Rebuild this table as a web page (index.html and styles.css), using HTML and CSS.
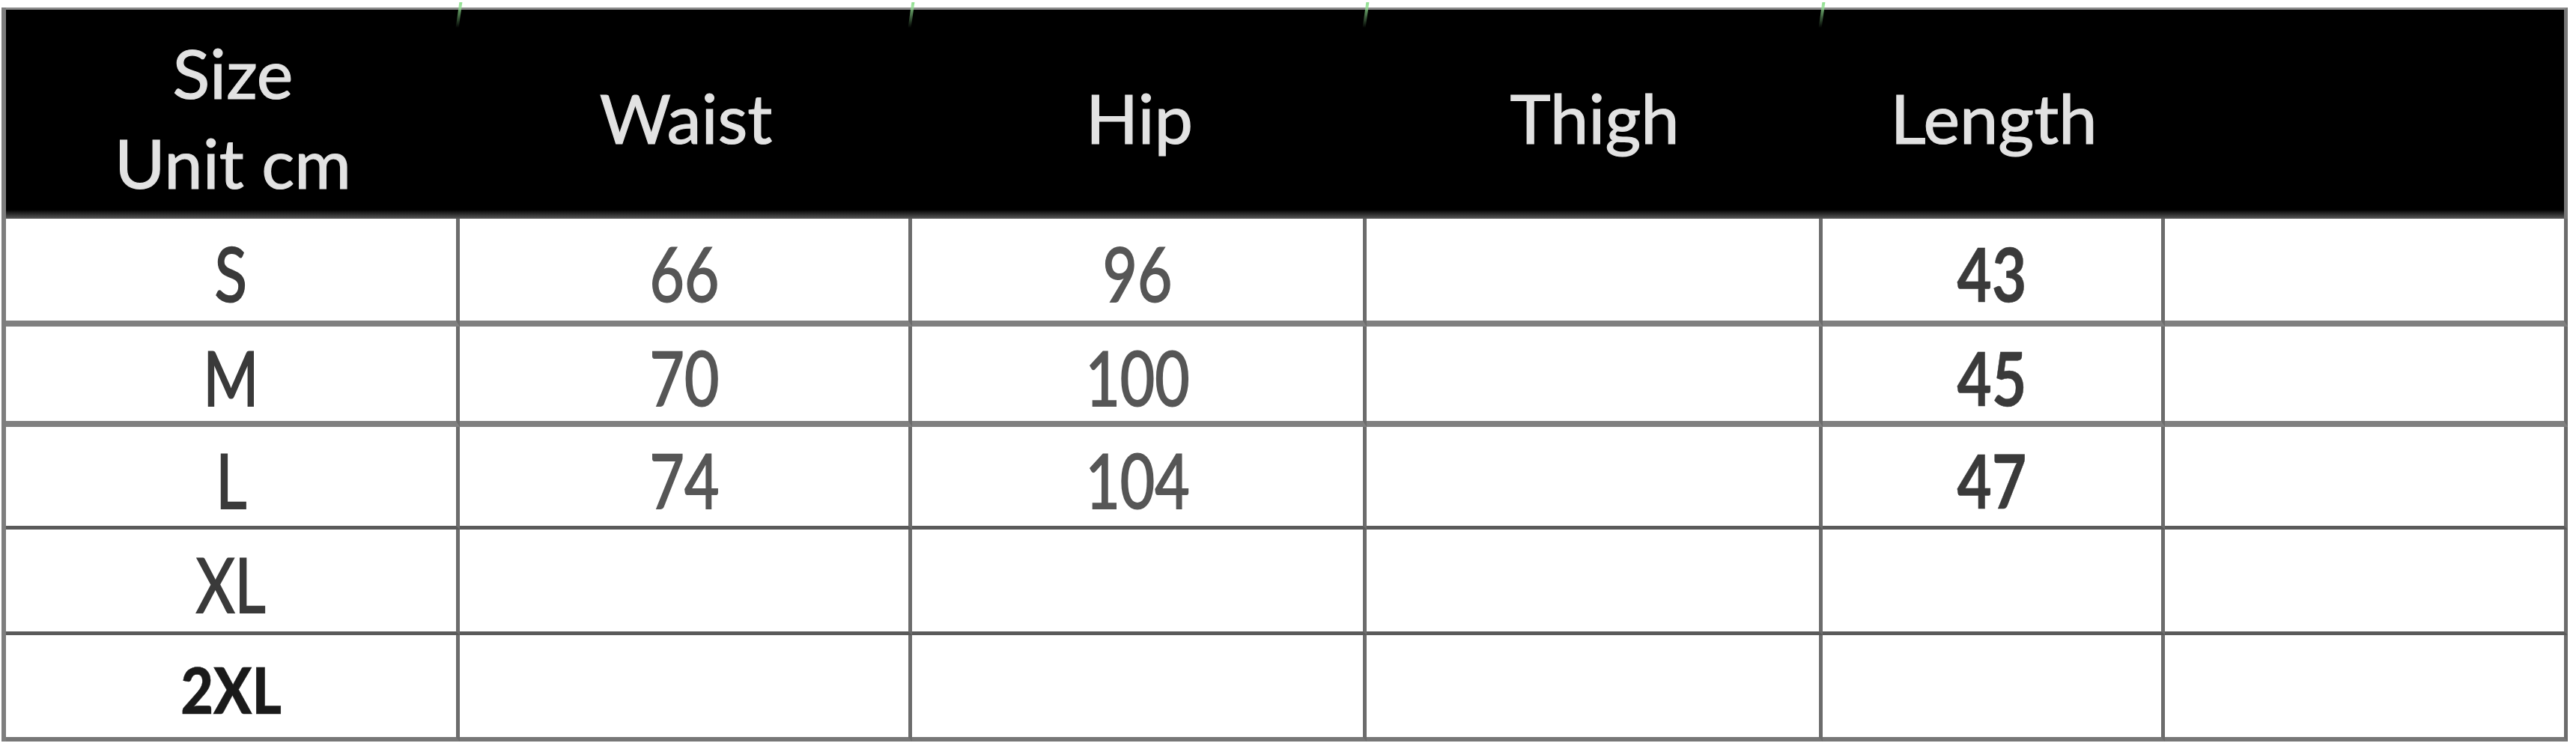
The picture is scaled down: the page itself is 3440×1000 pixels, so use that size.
FILE: index.html
```html
<!DOCTYPE html>
<html lang="en">
<head>
<meta charset="utf-8">
<title>Size chart</title>
<link rel="stylesheet" href="styles.css">
</head>
<body>
<div class="chart">
  <div class="row head-row">
    <div class="head"><span class="ht">Size<br>Unit cm</span></div>
    <div class="head tick"><span class="ht">Waist</span></div>
    <div class="head tick"><span class="ht">Hip</span></div>
    <div class="head tick"><span class="ht">Thigh</span></div>
    <div class="head tick"><span class="ht">Length</span></div>
    <div class="head last"></div>
  </div>
  <div class="row thick">
    <div class="cell"><span class="t size">S</span></div>
    <div class="cell"><span class="t num">66</span></div>
    <div class="cell"><span class="t num">96</span></div>
    <div class="cell"></div>
    <div class="cell"><span class="t len">43</span></div>
    <div class="cell"></div>
  </div>
  <div class="row thick">
    <div class="cell"><span class="t size">M</span></div>
    <div class="cell"><span class="t num">70</span></div>
    <div class="cell"><span class="t num">100</span></div>
    <div class="cell"></div>
    <div class="cell"><span class="t len">45</span></div>
    <div class="cell"></div>
  </div>
  <div class="row thin">
    <div class="cell"><span class="t size">L</span></div>
    <div class="cell"><span class="t num">74</span></div>
    <div class="cell"><span class="t num">104</span></div>
    <div class="cell"></div>
    <div class="cell"><span class="t len">47</span></div>
    <div class="cell"></div>
  </div>
  <div class="row thin">
    <div class="cell"><span class="t size">XL</span></div>
    <div class="cell"></div>
    <div class="cell"></div>
    <div class="cell"></div>
    <div class="cell"></div>
    <div class="cell"></div>
  </div>
  <div class="row bottom">
    <div class="cell"><span class="t size bold">2XL</span></div>
    <div class="cell"></div>
    <div class="cell"></div>
    <div class="cell"></div>
    <div class="cell"></div>
    <div class="cell"></div>
  </div>
</div>
</body>
</html>
```
FILE: styles.css
```css
html, body {
  margin: 0;
  padding: 0;
  background: #ffffff;
}

body {
  font-family: Lato, "Open Sans", "Liberation Sans", sans-serif;
}

.chart {
  display: grid;
  grid-template-columns: 606px 604px 607px 609px 457px 538px;
  grid-template-rows: 282px 144px 134px 137px 141px 142px;
  margin: 10px 0 0 2px;
  width: max-content;
  border-left: 6px solid #7e7e7e;
  filter: blur(0.7px);
}

.row {
  display: contents;
}

.head {
  position: relative;
  box-sizing: border-box;
  border-top: 3px solid #8c8c8c;
  background: linear-gradient(to bottom, #000 0, #000 calc(100% - 12px), #5a5a5a 100%);
  display: flex;
  align-items: center;
  justify-content: center;
  padding-top: 8px;
}

.head.last {
  border-right: 5px solid #777;
}

.tick::before {
  content: "";
  position: absolute;
  left: -3px;
  top: -10px;
  width: 4px;
  height: 34px;
  background: linear-gradient(to bottom, #8fe08f, rgba(120, 200, 120, 0));
  transform: skewX(-8deg);
}

.ht {
  color: #e2e2e2;
  font-size: 92px;
  line-height: 120px;
  text-align: center;
  -webkit-text-stroke: 1.2px #e2e2e2;
}

.cell {
  box-sizing: border-box;
  background: #fff;
  border-right: 5px solid #6c6c6c;
  display: flex;
  align-items: center;
  justify-content: center;
  padding-top: 8px;
}

.thick .cell {
  border-bottom: 8px solid #808080;
}

.thin .cell {
  border-bottom: 5px solid #5a5a5a;
}

.bottom .cell {
  border-bottom: 6px solid #777;
}

.t {
  display: inline-block;
  font-size: 100px;
  line-height: 1;
  transform: scaleX(0.8);
  -webkit-text-stroke: 2px currentColor;
}

.size {
  color: #3a3a3a;
}

.num {
  color: #565656;
}

.len {
  color: #3a3a3a;
  font-weight: 700;
  -webkit-text-stroke: 0.5px currentColor;
}

.bold {
  color: #1a1a1a;
  font-weight: 900;
  font-size: 86px;
  transform: scaleX(0.88);
  -webkit-text-stroke: 0.5px currentColor;
}
```
